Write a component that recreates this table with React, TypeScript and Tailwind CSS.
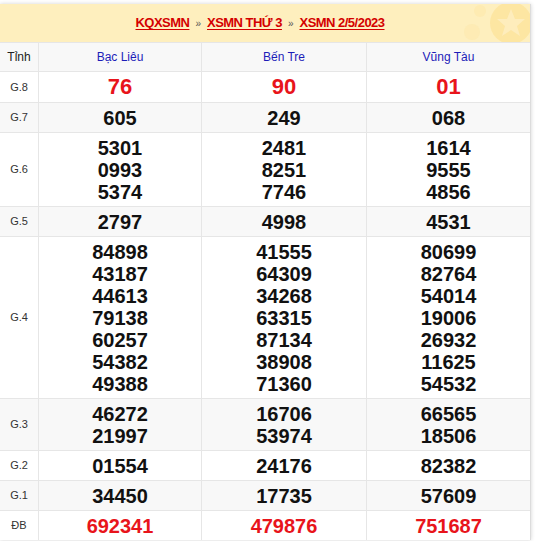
import React from 'react';

type Row = { label: string; values: string[][]; red?: boolean; big?: boolean };

const rows: Row[] = [
    { label: 'G.8', values: [['76'], ['90'], ['01']], red: true, big: true },
    { label: 'G.7', values: [['605'], ['249'], ['068']] },
    { label: 'G.6', values: [['5301', '0993', '5374'], ['2481', '8251', '7746'], ['1614', '9555', '4856']] },
    { label: 'G.5', values: [['2797'], ['4998'], ['4531']] },
    {
        label: 'G.4',
        values: [
            ['84898', '43187', '44613', '79138', '60257', '54382', '49388'],
            ['41555', '64309', '34268', '63315', '87134', '38908', '71360'],
            ['80699', '82764', '54014', '19006', '26932', '11625', '54532'],
        ],
    },
    { label: 'G.3', values: [['46272', '21997'], ['16706', '53974'], ['66565', '18506']] },
    { label: 'G.2', values: [['01554'], ['24176'], ['82382']] },
    { label: 'G.1', values: [['34450'], ['17735'], ['57609']] },
    { label: 'ĐB', values: [['692341'], ['479876'], ['751687']], red: true },
];

const provinces = ['Bạc Liêu', 'Bến Tre', 'Vũng Tàu'];

const Star = () => (
    <svg className="absolute right-0 top-0" width="80" height="38" viewBox="0 0 80 38">
        <circle cx="61" cy="19" r="21" fill="#fde49e" opacity="0.9" />
        <path d="M61 5 L65 15 L75 15 L67 22 L70 32 L61 26 L52 32 L55 22 L47 15 L57 15 Z" fill="#fdf0c8" opacity="0.7" />
        <circle cx="30" cy="7" r="6" fill="#fde7aa" opacity="0.6" />
        <circle cx="22" cy="28" r="8" fill="#fde7aa" opacity="0.5" />
    </svg>
);

const link = 'relative text-[13px] font-bold tracking-[-0.04em] text-[#d40000] underline underline-offset-2';

export default function App() {
    return (
        <div className="bg-white w-[537px] h-[541px] overflow-hidden pt-1" style={{ fontFamily: '"Liberation Sans", Arial, sans-serif' }}>
            <div className="w-[531px] shadow-[0_0_4px_rgba(0,0,0,0.18)] border-r border-[#dcdcdc]">
                <div className="relative h-[38px] bg-[#feefbe] flex items-center justify-center gap-[6px] pr-[10px] overflow-hidden">
                    <Star />
                    <a className={link}>KQXSMN</a>
                    <span className="relative text-[10px] text-[#555]">»</span>
                    <a className={link}>XSMN THỨ 3</a>
                    <span className="relative text-[10px] text-[#555]">»</span>
                    <a className={link}>XSMN 2/5/2023</a>
                </div>
                <div className="grid grid-cols-[39px_163px_165px_1fr] bg-[#f8f8f8] border-t border-[#e6e6e6] h-[29px] items-stretch text-[12px]">
                    <div className="flex items-center justify-center text-[#222] border-r border-[#e6e6e6]">Tỉnh</div>
                    {provinces.map((p, i) => (
                        <div key={p} className={`flex items-center justify-center text-[#1d1db8] ${i < 2 ? 'border-r border-[#e6e6e6]' : ''}`}>{p}</div>
                    ))}
                </div>
                {rows.map((row, ri) => (
                    <div
                        key={row.label}
                        className={`grid grid-cols-[39px_163px_165px_1fr] border-t border-[#e6e6e6] ${ri % 2 === 1 ? 'bg-[#f8f8f8]' : 'bg-white'}`}
                    >
                        <div className="flex items-center justify-center text-[11px] text-[#333] border-r border-[#e6e6e6]">{row.label}</div>
                        {row.values.map((col, ci) => (
                            <div
                                key={ci}
                                className={`flex flex-col items-center justify-center font-bold leading-[22px] ${row.big ? 'text-[22px] py-1' : 'text-[20px] py-[3.5px]'} ${row.red ? 'text-[#e8141b]' : 'text-[#111]'} ${ci < 2 ? 'border-r border-[#e6e6e6]' : ''}`}
                            >
                                {col.map(n => (
                                    <span key={n}>{n}</span>
                                ))}
                            </div>
                        ))}
                    </div>
                ))}
            </div>
        </div>
    );
}
